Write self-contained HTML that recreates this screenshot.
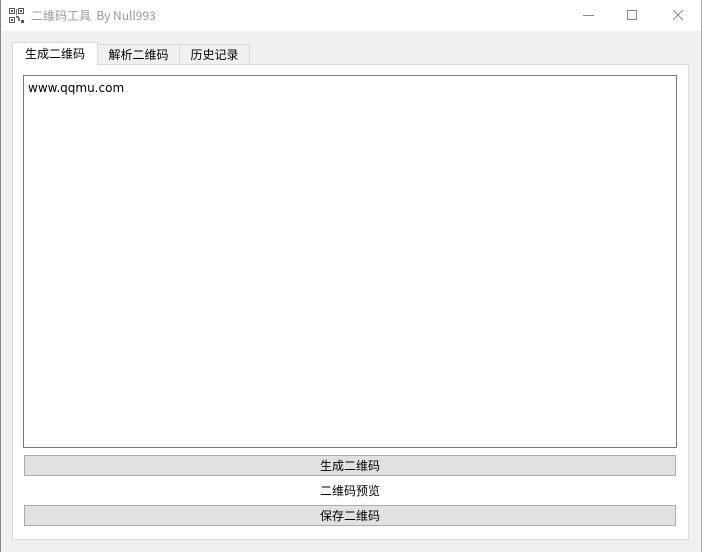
<!DOCTYPE html>
<html><head><meta charset="utf-8"><style>
*{margin:0;padding:0;box-sizing:border-box}
body{width:702px;height:552px;background:#f0f0f0;position:relative;overflow:hidden;font-family:"Liberation Sans","Microsoft YaHei","Noto Sans CJK SC",sans-serif;font-size:12px;color:#000}
.abs{position:absolute}
#title{left:0;top:0;width:702px;height:31px;background:#fff}
.tab{position:absolute;border:1px solid #d9d9d9;background:#f0f0f0;text-align:center;line-height:18px;font-family:"Noto Sans CJK SC",sans-serif;font-size:12px}
.btn{position:absolute;left:24px;width:652px;height:21px;background:#e1e1e1;border:1px solid #adadad;text-align:center;line-height:19px;font-family:"Noto Sans CJK SC",sans-serif;font-size:12px}
</style></head><body>
<div class="abs" id="title"></div>
<svg class="abs" style="left:9px;top:8px" width="16" height="16" viewBox="0 0 16 16">
<rect x="0.5" y="0.5" width="5" height="5" fill="none" stroke="#555"/><rect x="9.5" y="0.5" width="5" height="5" fill="none" stroke="#555"/><rect x="0.5" y="9.5" width="5" height="5" fill="none" stroke="#555"/>
<rect x="2" y="2" width="2" height="2" fill="#555"/><rect x="11" y="2" width="2" height="2" fill="#555"/><rect x="2" y="11" width="2" height="2" fill="#555"/>
<rect x="7" y="1" width="1" height="6" fill="#777"/><rect x="7" y="8" width="3" height="2" fill="#777"/><rect x="9" y="10" width="2" height="3" fill="#777"/><rect x="12" y="12" width="3" height="3" fill="#555"/></svg>
<div class="abs" style="left:31px;top:7px;color:#999;font-size:12px;font-family:'Noto Sans CJK SC',sans-serif;line-height:17px">二维码工具&nbsp; By Null993</div>
<div class="abs" style="left:583px;top:15px;width:11px;height:1px;background:#888"></div>
<div class="abs" style="left:627px;top:10px;width:10px;height:10px;border:1px solid #888"></div>
<svg class="abs" style="left:672px;top:9px" width="12" height="12"><path d="M1 1L11 11M11 1L1 11" stroke="#888" stroke-width="1"/></svg>
<div class="abs" style="left:12px;top:64px;width:677px;height:476px;background:#fff;border:1px solid #d9d9d9"></div>
<div class="tab" style="left:97px;top:44px;width:83px;height:21px;line-height:19px">解析二维码</div>
<div class="tab" style="left:179px;top:44px;width:71px;height:21px;line-height:19px">历史记录</div>
<div class="tab" style="left:12px;top:42px;width:86px;height:23px;background:#fff;border-bottom:none;line-height:21px">生成二维码</div>
<div class="abs" style="left:23px;top:75px;width:654px;height:373px;border:1px solid #7a7a7a;background:#fff"></div>
<div class="abs" style="left:28px;top:80px;line-height:16px;font-family:'DejaVu Sans',sans-serif;font-size:12px">www.qqmu.com</div>
<div class="btn" style="top:455px">生成二维码</div>
<div class="abs" style="left:24px;width:652px;top:482px;text-align:center;font-family:'Noto Sans CJK SC',sans-serif;line-height:17px">二维码预览</div>
<div class="btn" style="top:505px">保存二维码</div>
<div class="abs" style="left:0;top:0;width:1px;height:552px;background:#888"></div>
<div class="abs" style="left:701px;top:0;width:1px;height:552px;background:#aaa"></div>
</body></html>
